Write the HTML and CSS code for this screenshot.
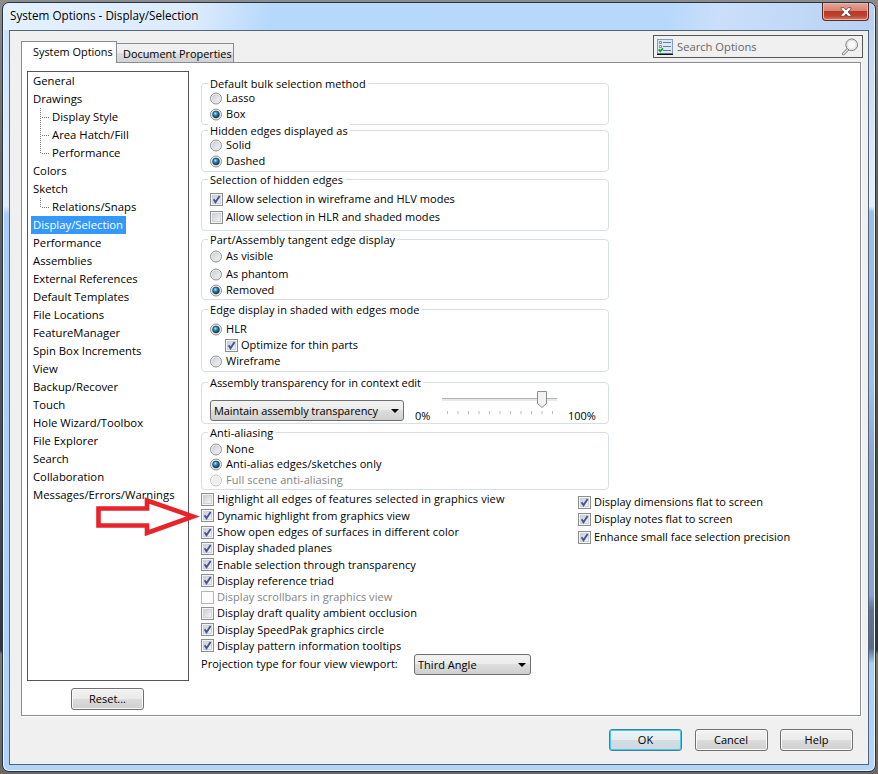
FILE: index.html
```html
<!DOCTYPE html>
<html lang="en">
<head>
<meta charset="utf-8">
<title>System Options</title>
<link rel="stylesheet" href="styles.css">
</head>
<body>
<svg class="defs" width="0" height="0" aria-hidden="true">
  <defs>
    <linearGradient id="boxfill" x1="0" y1="0" x2="1" y2="1"><stop offset="0" stop-color="#c9cdd3"/><stop offset="1" stop-color="#f6f6f7"/></linearGradient>
    <radialGradient id="ball" cx=".4" cy=".35" r=".65"><stop offset="0" stop-color="#b5e8fa"/><stop offset=".35" stop-color="#3b9ac6"/><stop offset="1" stop-color="#0b2f4c"/></radialGradient>
    <symbol id="box" viewBox="0 0 13 13"><rect x=".5" y=".5" width="12" height="12" fill="#f4f4f4" stroke="#8e8f8f"/><rect x="2.5" y="2.5" width="8" height="8" fill="url(#boxfill)" stroke="#cfd2d6"/></symbol>
    <symbol id="checked" viewBox="0 0 13 13"><use href="#box"/><path d="M3.6 6.3 5.5 9.3 9.6 3" fill="none" stroke="#42579b" stroke-width="1.9"/></symbol>
    <symbol id="boxoff" viewBox="0 0 13 13"><rect x=".5" y=".5" width="12" height="12" fill="#fcfcfc" stroke="#b5b5b5"/></symbol>
    <symbol id="radio" viewBox="0 0 13 13"><circle cx="6" cy="6.5" r="5.5" fill="#f5f5f5" stroke="#8e8f8f"/><circle cx="6" cy="6.5" r="4" fill="url(#boxfill)" stroke="#d5d7da" stroke-width=".7"/></symbol>
    <symbol id="selected" viewBox="0 0 13 13"><use href="#radio"/><circle cx="6" cy="6.5" r="3.4" fill="url(#ball)" stroke="#173f5c" stroke-width=".7"/></symbol>
    <symbol id="radiooff" viewBox="0 0 13 13"><circle cx="6" cy="6.5" r="5.5" fill="#f7f7f7" stroke="#c4c4c4"/><circle cx="6" cy="6.5" r="4" fill="#ededed"/></symbol>
  </defs>
</svg>
<div class="window">
  <header class="titlebar">
    <span class="title">System Options - Display/Selection</span>
    <button class="close" aria-label="Close"><svg width="12" height="10" viewBox="0 0 12 10"><path d="M1 .7H4L6 3 8 .7H11V2L8 5 11 8V9.3H8L6 7 4 9.3H1V8L4 5 1 2Z" fill="#fff" stroke="#5f4548" stroke-width=".8"/></svg></button>
  </header>
  <main class="client">
    <div class="top">
      <div class="tab active">System Options</div>
      <div class="tab">Document Properties</div>
      <div class="search">
        <svg width="16" height="16" viewBox="0 0 16 16"><rect width="16" height="16" fill="#829eba"/><rect x="1" y="1" width="14" height="13" fill="#dce9f4"/><rect y="14.7" width="16" height="1.3" fill="#111"/><path d="M6 3.5H14M6 7.5H14M6 11.5H14" stroke="#65809e"/><path d="M2.5 2.5h2v2h-2zM2.5 6.5h2v2h-2z" fill="#fff" stroke="#587695" stroke-width=".8"/><path d="M1.7 10.4 3.3 12.2 6 9.4" fill="none" stroke="#139b29" stroke-width="1.7"/></svg>
        <span>Search Options</span>
        <svg width="18" height="18" viewBox="0 0 18 18"><path d="M7.2 11 2.4 15.7" stroke="#777" stroke-width="3" stroke-linecap="round"/><path d="M7.2 11 2.4 15.7" stroke="#eee" stroke-width="1.3" stroke-linecap="round"/><circle cx="10.7" cy="6.8" r="5.8" fill="#f8f8f8" stroke="#777"/><circle cx="10.7" cy="6.8" r="4.5" fill="none" stroke="#ddd"/></svg>
      </div>
    </div>
    <div class="panel">
      <div class="side">
        <ul class="tree">
          <li>General</li><li>Drawings</li><li class="child"><span>Display Style</span></li><li class="child"><span>Area Hatch/Fill</span></li><li class="child last"><span>Performance</span></li>
          <li>Colors</li><li>Sketch</li><li class="child last"><span>Relations/Snaps</span></li><li class="current"><span>Display/Selection</span></li><li>Performance</li><li>Assemblies</li><li>External References</li><li>Default Templates</li><li>File Locations</li><li>FeatureManager</li><li>Spin Box Increments</li><li>View</li><li>Backup/Recover</li><li>Touch</li><li>Hole Wizard/Toolbox</li><li>File Explorer</li><li>Search</li><li>Collaboration</li><li>Messages/Errors/Warnings</li>
        </ul>
        <button class="btn reset">Reset...</button>
      </div>
      <div class="settings">
        <section class="group bulk"><h2>Default bulk selection method</h2>
          <label><svg><use href="#radio"/></svg>Lasso</label><label><svg><use href="#selected"/></svg>Box</label></section>
        <section class="group hidden-edges"><h2>Hidden edges displayed as</h2>
          <label><svg><use href="#radio"/></svg>Solid</label><label><svg><use href="#selected"/></svg>Dashed</label></section>
        <section class="group allow"><h2>Selection of hidden edges</h2>
          <label><svg><use href="#checked"/></svg>Allow selection in wireframe and HLV modes</label><label><svg><use href="#box"/></svg>Allow selection in HLR and shaded modes</label></section>
        <section class="group tangent"><h2>Part/Assembly tangent edge display</h2>
          <label><svg><use href="#radio"/></svg>As visible</label><label><svg><use href="#radio"/></svg>As phantom</label><label><svg><use href="#selected"/></svg>Removed</label></section>
        <section class="group shaded"><h2>Edge display in shaded with edges mode</h2>
          <label><svg><use href="#selected"/></svg>HLR</label><label class="nested"><svg><use href="#checked"/></svg>Optimize for thin parts</label><label><svg><use href="#radio"/></svg>Wireframe</label></section>
        <section class="group transparency"><h2>Assembly transparency for in context edit</h2>
          <div class="slider-row">
            <div class="select assembly"><span>Maintain assembly transparency</span><i></i></div>
            <span class="min">0%</span>
            <svg class="slider" width="116" height="28" viewBox="0 0 116 28"><rect x="0" y="7" width="115" height="3" fill="#e7eaea"/><path d="M0 7.5H115" stroke="#b0b2b2"/><path d="M5.5 20v3M16 20v3M26.5 20v3M37 20v3M47.5 20v3M58 20v3M68.5 20v3M79 20v3M89.5 20v3M100 20v3M110.5 20v3" stroke="#b9b9b9"/><path d="M95.5 .5h9v12l-4.5 4-4.5-4z" fill="#f2f2f2" stroke="#8c8d8d"/></svg>
            <span class="max">100%</span>
          </div></section>
        <section class="group aliasing"><h2>Anti-aliasing</h2>
          <label><svg><use href="#radio"/></svg>None</label><label><svg><use href="#selected"/></svg>Anti-alias edges/sketches only</label><label class="disabled"><svg><use href="#radiooff"/></svg>Full scene anti-aliasing</label></section>
        <div class="checks">
          <div class="left">
            <label class="wide"><svg><use href="#box"/></svg>Highlight all edges of features selected in graphics view</label>
            <label class="lower"><svg><use href="#checked"/></svg>Dynamic highlight from graphics view</label>
            <label class="wide"><svg><use href="#checked"/></svg>Show open edges of surfaces in different color</label>
            <label><svg><use href="#checked"/></svg>Display shaded planes</label>
            <label><svg><use href="#checked"/></svg>Enable selection through transparency</label>
            <label><svg><use href="#checked"/></svg>Display reference triad</label>
            <label class="disabled"><svg><use href="#boxoff"/></svg>Display scrollbars in graphics view</label>
            <label><svg><use href="#box"/></svg>Display draft quality ambient occlusion</label>
            <label><svg><use href="#checked"/></svg>Display SpeedPak graphics circle</label>
            <label><svg><use href="#checked"/></svg>Display pattern information tooltips</label>
          </div>
          <div class="right">
            <label><svg><use href="#checked"/></svg>Display dimensions flat to screen</label>
            <label><svg><use href="#checked"/></svg>Display notes flat to screen</label>
            <label><svg><use href="#checked"/></svg>Enhance small face selection precision</label>
          </div>
        </div>
        <div class="projection"><span>Projection type for four view viewport:</span><div class="select angle"><span>Third Angle</span><i></i></div></div>
      </div>
    </div>
    <footer class="actions"><button class="btn ok">OK</button><button class="btn cancel">Cancel</button><button class="btn">Help</button></footer>
  </main>
</div>
<svg class="arrow" width="106" height="44" viewBox="0 0 106 44"><path d="M4.5 13.5H53V5.5L99 21.500 53 38V30.500H4.500Z" fill="none" stroke="#e8232a" stroke-width="4.600"/></svg>
</body>
</html>
```

FILE: styles.css
```css
* { box-sizing: border-box; }
body { margin: 0; width: 878px; height: 774px; overflow: hidden; padding: 2px; font: 11px/16px "Open Sans", "Noto Sans", sans-serif; color: #000; background: linear-gradient(#8c8c8c, #686868 20%, #4b4b50 62%, #35353a 84%, #777 84.5%, #6b6765); position: relative; }
.defs, .arrow { position: absolute; }
.arrow { left: 94px; top: 495px; }
h2, ul { margin: 0; padding: 0; font: inherit; }
button { font: inherit; color: inherit; padding: 0; }
.window { width: 874px; height: 770px; border: 1px solid #263340; border-radius: 7px; padding: 0 6px; box-shadow: inset 0 0 0 1px #eaf6ff;
  background:
    linear-gradient(#b9d1f0, #dbe9fa 20%, #e2eefb 26.5%, #9cbde5 27.2%, #9fc0e8 50%, #8ba5cf 60%, #8ba5cf 77%, #61748f 79%, #596a86 84%, #a8cef5 86%, #b4d6f8) right / 8px 100% no-repeat,
    linear-gradient(#c9e0f9, #dceafa 18%, #dfecfa 26.5%, #a9cdf4 27.5%, #b1d4f8); }
.titlebar { height: 27px; margin: 0 -5px; padding-left: 6px; display: flex; align-items: flex-start; justify-content: space-between; background: linear-gradient(100deg, #e3f0fe 0, #dcebfd 22%, #b6d8fb 31%, #b7d8fb 76%, #cbdffa 82%, #b7d1f3); border-radius: 6px 6px 0 0; }
.title { font-size: 11.7px; line-height: 25px; }
.close { width: 47px; height: 18px; margin-right: 5px; border: 1px solid #5a2829; border-top: 0; border-radius: 0 0 4px 4px; background: linear-gradient(#e4a699, #d98370 45%, #b83b27 50%, #bd432d 75%, #dc7962); box-shadow: inset 0 0 0 1px #edb5a9; display: flex; align-items: center; justify-content: center; }
.client { height: 735px; border: 1px solid #51647a; background: #f0f0f0; padding: 4px 8px 0 11px; }
.top { height: 27px; display: flex; align-items: flex-end; }
.tab { height: 19px; border: 1px solid #898c95; border-left: 0; border-bottom: 0; background: linear-gradient(#f2f2f2, #ededed 48%, #dedede 50%, #d2d2d2); width: 117px; padding-left: 6px; font-size: 10.9px; line-height: 20px; white-space: nowrap; }
.tab.active { width: 96px; height: 22px; border-left: 1px solid #898c95; background: #fff; margin-bottom: -1px; padding-left: 11px; position: relative; line-height: 20px; z-index: 1; }
.search { width: 210px; height: 23px; border: 1px solid #555; margin: 0 -3px 4px auto; display: flex; align-items: center; padding: 0 3px; color: #666; font-size: 11.2px; }
.search span { margin-left: 4px; flex: 1; }
.panel { width: 840px; height: 654px; border: 1px solid #898c95; box-shadow: 1px 1px #fff; background: #fff; display: flex; padding: 8px 0 0 5px; }
.side { width: 162px; }
.tree { height: 610px; border: 1px solid #54585d; list-style: none; padding-left: 5px; font-size: 11.3px; line-height: 18px; white-space: nowrap; }
.tree li { height: 18px; }
.child { padding-left: 7px; display: flex; }
.child::before { content: ""; width: 10px; height: 18px; margin-right: 2px; --stem: 18px;
  background:
    repeating-linear-gradient(#777 0 1px, #fff 1px 2px) 0 0 / 1px var(--stem) no-repeat,
    repeating-linear-gradient(90deg, #777 0 1px, #fff 1px 2px) 0 9px / 9px 1px no-repeat; }
.last::before { --stem: 10px; }
.current span { display: block; width: 95px; margin-left: -2px; padding-left: 2px; background: #3399ff; color: #fff; }
.btn { display: block; width: 73px; height: 22px; border: 1px solid #707070; border-radius: 3px; background: linear-gradient(#f2f2f2, #ebebeb 48%, #dcdcdc 50%, #cfcfcf); box-shadow: inset 0 0 0 1px #fafafa; font-size: 11px; line-height: 20px; text-align: center; }
.reset { margin: 7px 0 0 44px; }
.settings { margin-left: 12px; width: 640px; letter-spacing: .03px; white-space: nowrap; }
.group { width: 408px; border: 1px solid #d5dfe5; border-radius: 4px; padding: var(--pad) 8px 0; margin-bottom: 5px; --pad: 0px; }
.group h2 { width: max-content; height: 16px; margin: calc(-8px - var(--pad)) 0 calc(var(--pad) - 8px) -2px; background: #fff; padding: 0 2px; letter-spacing: .06px; }
label { display: flex; align-items: center; height: 16px; }
label svg { width: 13px; height: 13px; margin-right: 3px; flex: none; }
.disabled { color: #838383; }
.wide { letter-spacing: .1px; }
.lower { margin-top: .5px; }
.bulk { margin-top: 12px; height: 42px; --pad: 6px; }
.hidden-edges { height: 42px; --pad: 6px; margin-bottom: 7px; }
.allow { height: 52px; --pad: 11px; margin-bottom: 8px; }
.allow label + label { margin-top: 2px; }
.tangent { height: 61px; --pad: 8px; margin-bottom: 9px; }
.tangent label:nth-of-type(2) { margin-top: 2px; }
.shaded { height: 63px; --pad: 11px; margin-bottom: 10px; }
.nested { margin-left: 15px; }
.transparency { height: 42px; margin-bottom: 8px; }
.transparency h2 { letter-spacing: -.05px; }
.slider-row { display: flex; padding-top: 8px; height: 40px; letter-spacing: -.03px; }
.select { height: 21px; border: 1px solid #707070; border-radius: 3px; background: linear-gradient(#f2f2f2, #ebebeb 48%, #dddddd 50%, #cfcfcf); display: flex; align-items: center; justify-content: space-between; padding: 0 4px 0 3px; }
.select i { border: 4px solid transparent; border-top-color: #000; border-bottom: 0; }
.assembly { width: 194px; margin-top: 9px; letter-spacing: -.08px; }
.min { margin: 17px 10px 0 11px; width: 17px; }
.slider { margin-right: 11px; flex: none; }
.max { margin: 17px 0 0 -1px; }
.aliasing { height: 58px; --pad: 8px; margin-bottom: 1px; letter-spacing: .08px; }
.aliasing label:nth-of-type(2) { margin-top: -1px; }
.checks { display: flex; height: 163px; }
.left { width: 377px; display: flex; flex-direction: column; justify-content: space-between; }
.right { padding-top: 3px; letter-spacing: 0; }
.right label { margin-bottom: 1px; }
.right label + label { margin-bottom: 2px; }
.projection { display: flex; height: 21px; }
.projection > span { width: 213px; padding-top: 2px; }
.angle { width: 117px; }
.actions { display: flex; gap: 12.5px; justify-content: flex-end; padding: 13px 7px 0 0; }
.ok { border-color: #3c7fb1; box-shadow: inset 0 0 0 1px #48c8ee; background: linear-gradient(#edf3f6, #e5edf1 48%, #d5dde3 50%, #ced8df); }
```
